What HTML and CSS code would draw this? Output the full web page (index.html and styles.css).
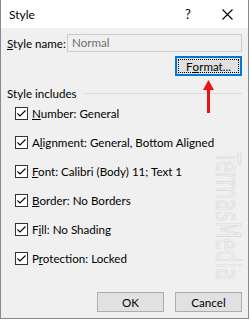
FILE: index.html
```html
<!DOCTYPE html>
<html>
<head>
<meta charset="utf-8">
<link rel="stylesheet" href="styles.css">
</head>
<body>
<div class="dialog">
  <div class="titlebar">
    <span class="title">Style</span>
    <span class="help">?</span>
    <span class="close"><svg width="11" height="11" viewBox="0 0 11 11"><path d="M0.5 0.5 L10.5 10.5 M10.5 0.5 L0.5 10.5" stroke="#000" stroke-width="1.1" fill="none"/></svg></span>
  </div>
  <div class="content">
    <div class="name-row">
      <span class="name-label"><u>S</u>tyle name:</span>
      <div class="input">Normal</div>
    </div>
    <div class="format-row">
      <div class="btn btn-default">F<u>o</u>rmat...</div>
    </div>
    <div class="group-head"><span>Style includes</span><span class="rule"></span></div>
    <div class="checks">
      <div class="check"><span class="box"><svg width="13" height="13" viewBox="0 0 13 13"><path d="M2.5 6.5 L5 9 L10.5 3.5" stroke="#000" stroke-width="1.1" fill="none"/></svg></span><span><u>N</u>umber: General</span></div>
      <div class="check"><span class="box"><svg width="13" height="13" viewBox="0 0 13 13"><path d="M2.5 6.5 L5 9 L10.5 3.5" stroke="#000" stroke-width="1.1" fill="none"/></svg></span><span>A<u>l</u>ignment: General, Bottom Aligned</span></div>
      <div class="check"><span class="box"><svg width="13" height="13" viewBox="0 0 13 13"><path d="M2.5 6.5 L5 9 L10.5 3.5" stroke="#000" stroke-width="1.1" fill="none"/></svg></span><span><u>F</u>ont: Calibri (Body) 11; Text 1</span></div>
      <div class="check"><span class="box"><svg width="13" height="13" viewBox="0 0 13 13"><path d="M2.5 6.5 L5 9 L10.5 3.5" stroke="#000" stroke-width="1.1" fill="none"/></svg></span><span><u>B</u>order: No Borders</span></div>
      <div class="check"><span class="box"><svg width="13" height="13" viewBox="0 0 13 13"><path d="M2.5 6.5 L5 9 L10.5 3.5" stroke="#000" stroke-width="1.1" fill="none"/></svg></span><span>F<u>i</u>ll: No Shading</span></div>
      <div class="check"><span class="box"><svg width="13" height="13" viewBox="0 0 13 13"><path d="M2.5 6.5 L5 9 L10.5 3.5" stroke="#000" stroke-width="1.1" fill="none"/></svg></span><span>P<u>r</u>otection: Locked</span></div>
    </div>
    <div class="footer">
      <div class="btn">OK</div>
      <div class="btn">Cancel</div>
    </div>
  </div>
  <svg class="arrow" width="13" height="34" viewBox="0 0 13 34"><path d="M6.5 0 L12 10 L8 10 L8 33 L5 33 L5 10 L1 10 Z" fill="#ee1111"/></svg>
  <div class="watermark">TermasMedia</div>
</div>
</body>
</html>
```
FILE: styles.css
```css
html, body {
  margin: 0;
  padding: 0;
  background: #ffffff;
}
.dialog {
  position: relative;
  width: 249px;
  height: 319px;
  box-sizing: border-box;
  border: 1px solid #8a8a8a;
  border-top: none;
  background: #f0f0f0;
  display: flex;
  flex-direction: column;
  font-family: "Lato", "Noto Sans", sans-serif;
  font-size: 11.6px;
  color: #000;
  overflow: hidden;
}
.titlebar {
  height: 28px;
  background: #ffffff;
  display: flex;
  align-items: center;
  padding-left: 8px;
  flex-shrink: 0;
  font-size: 12px;
}
.title {
  flex: 1;
}
.help {
  width: 10px;
  margin-right: 27px;
  font-size: 13px;
}
.close {
  display: flex;
  margin-right: 15px;
}
.content {
  flex: 1;
  display: flex;
  flex-direction: column;
  padding: 6px 6px 6px 6px;
}
.name-row {
  display: flex;
  align-items: center;
  height: 18px;
}
.name-label {
  width: 60px;
  white-space: nowrap;
}
.input {
  flex: 1;
  height: 18px;
  box-sizing: border-box;
  border: 1px solid #cccccc;
  background: #f0f0f0;
  color: #6d6d6d;
  padding-left: 4px;
  line-height: 16px;
}
.format-row {
  display: flex;
  justify-content: flex-end;
  margin-top: 4px;
}
.btn {
  width: 67px;
  height: 20px;
  box-sizing: border-box;
  border: 1px solid #adadad;
  background: #e1e1e1;
  display: flex;
  align-items: center;
  justify-content: center;
  position: relative;
}
.btn-default {
  border: 2px solid #0078d7;
}
.btn-default::after {
  content: "";
  position: absolute;
  inset: 1px;
  border: 1px dotted #000;
}
.group-head {
  display: flex;
  align-items: center;
  height: 16px;
  margin-top: 9px;
}
.rule {
  flex: 1;
  height: 1px;
  background: #dcdcdc;
  margin-left: 6px;
}
.checks {
  display: flex;
  flex-direction: column;
  gap: 13px;
  margin-top: 4px;
  padding-left: 8px;
}
.check {
  display: flex;
  align-items: center;
  height: 16px;
}
.box {
  width: 13px;
  height: 13px;
  box-sizing: border-box;
  border: 1px solid #333;
  background: #fff;
  margin-right: 4px;
  display: flex;
  position: relative;
}
.box svg {
  position: absolute;
  left: -1px;
  top: -1px;
}
.footer {
  margin-top: auto;
  display: flex;
  justify-content: flex-end;
  gap: 11px;
}
.arrow {
  position: absolute;
  left: 201px;
  top: 80px;
}
.watermark {
  position: absolute;
  left: 210px;
  top: 152px;
  writing-mode: vertical-rl;
  font-family: "DejaVu Sans Condensed", "DejaVu Sans", sans-serif;
  font-size: 34px;
  line-height: 34px;
  color: #eeeeee;
  -webkit-text-stroke: 0.5px #cfcfcf;
  transform: scaleY(0.64);
  transform-origin: top left;
}
```
